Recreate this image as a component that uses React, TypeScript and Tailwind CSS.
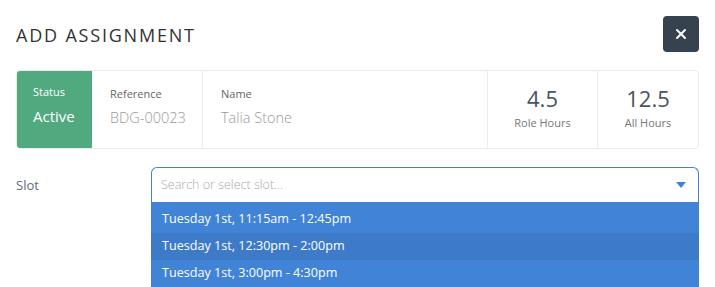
import { X } from "lucide-react";

const slots = [
  "Tuesday 1st, 11:15am - 12:45pm",
  "Tuesday 1st, 12:30pm - 2:00pm",
  "Tuesday 1st, 3:00pm - 4:30pm",
];

export default function App() {
  return (
    <div
      className="w-[715px] h-[287px] overflow-hidden bg-white px-4 pt-4"
      style={{ fontFamily: '"Open Sans", sans-serif' }}
    >
      <div className="flex items-center justify-between h-9">
        <h1 className="text-[18px] tracking-[1.8px] text-[#333] font-normal pt-0.5">ADD ASSIGNMENT</h1>
        <button className="w-9 h-9 rounded-[4px] bg-[#37424f] flex items-center justify-center">
          <X className="w-4 h-4 text-white" strokeWidth={3} />
        </button>
      </div>

      <div className="mt-[18px] flex h-[79px] border border-[#ebebeb] rounded-[4px] overflow-hidden">
        <div className="w-[76px] bg-[#50a97f] text-white pl-[17px] pt-[14px] -my-px -ml-px">
          <div className="text-[11px] leading-4">Status</div>
          <div className="text-[15px] leading-6 mt-1">Active</div>
        </div>
        <div className="w-[111px] border-r border-[#ebebeb] pl-[18px] pt-[15px]">
          <div className="text-[11px] leading-4 text-[#666]">Reference</div>
          <div className="text-[14.5px] font-light leading-6 mt-1 text-[#999]">BDG-00023</div>
        </div>
        <div className="flex-1 border-r border-[#ebebeb] pl-[18px] pt-[15px]">
          <div className="text-[11px] leading-4 text-[#666]">Name</div>
          <div className="text-[14.5px] font-light leading-6 mt-1 text-[#999]">Talia Stone</div>
        </div>
        <div className="w-[110px] border-r border-[#ebebeb] flex flex-col items-center pt-[13px]">
          <div className="text-[22px] leading-7 text-[#4a5360]">4.5</div>
          <div className="text-[11px] leading-4 mt-[3px] text-[#777]">Role Hours</div>
        </div>
        <div className="w-[100px] flex flex-col items-center pt-[13px]">
          <div className="text-[22px] leading-7 text-[#4a5360]">12.5</div>
          <div className="text-[11px] leading-4 mt-[3px] text-[#777]">All Hours</div>
        </div>
      </div>

      <div className="mt-[18px] flex">
        <div className="w-[135px] pt-[9px] text-[13px] text-[#5b6b80]">Slot</div>
        <div className="flex-1">
          <div className="h-[35px] border border-b-0 border-[#4a7fcf] rounded-t-[6px] flex items-center justify-between pl-[9px] pr-3">
            <span className="text-[12.5px] font-light text-[#aaa]">Search or select slot...</span>
            <svg width="10" height="6" viewBox="0 0 10 6">
              <path d="M0 0 H10 L5 6 Z" fill="#3f83d6" />
            </svg>
          </div>
          <div className="bg-[#4183d6] pt-1">
            {slots.map((s, i) => (
              <div
                key={s}
                className={`h-[27px] flex items-center pl-[11px] text-[12.6px] text-white ${i === 1 ? "bg-[#3d7bc9]" : ""}`}
              >
                {s}
              </div>
            ))}
          </div>
        </div>
      </div>
    </div>
  );
}
